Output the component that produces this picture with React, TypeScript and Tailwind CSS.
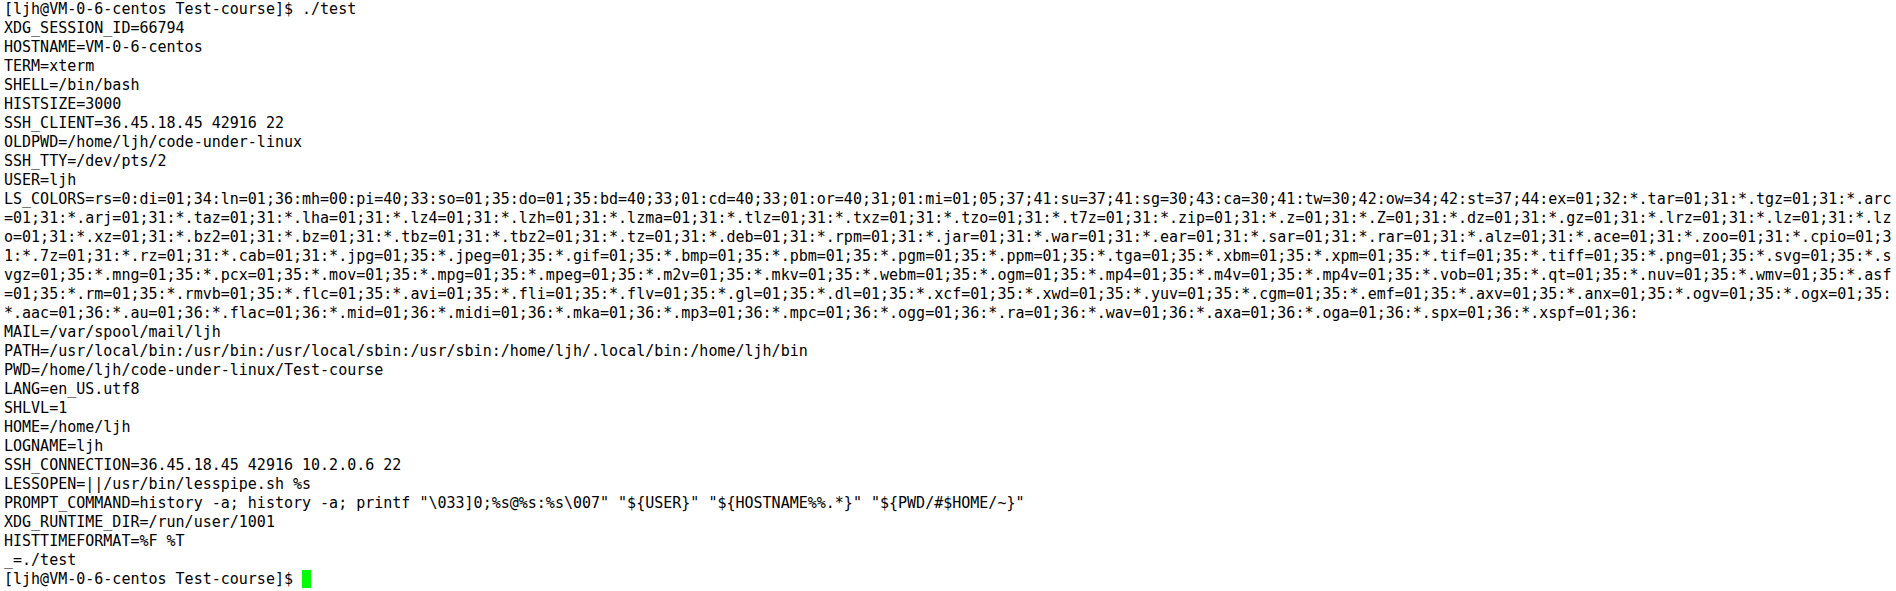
import React from "react";

const LS_COLORS =
  "LS_COLORS=rs=0:di=01;34:ln=01;36:mh=00:pi=40;33:so=01;35:do=01;35:bd=40;33;01:cd=40;33;01:or=40;31;01:mi=01;05;37;41:su=37;41:sg=30;43:ca=30;41:tw=30;42:ow=34;42:st=37;44:ex=01;32:*.tar=01;31:*.tgz=01;31:*.arc=01;31:*.arj=01;31:*.taz=01;31:*.lha=01;31:*.lz4=01;31:*.lzh=01;31:*.lzma=01;31:*.tlz=01;31:*.txz=01;31:*.tzo=01;31:*.t7z=01;31:*.zip=01;31:*.z=01;31:*.Z=01;31:*.dz=01;31:*.gz=01;31:*.lrz=01;31:*.lz=01;31:*.lzo=01;31:*.xz=01;31:*.bz2=01;31:*.bz=01;31:*.tbz=01;31:*.tbz2=01;31:*.tz=01;31:*.deb=01;31:*.rpm=01;31:*.jar=01;31:*.war=01;31:*.ear=01;31:*.sar=01;31:*.rar=01;31:*.alz=01;31:*.ace=01;31:*.zoo=01;31:*.cpio=01;31:*.7z=01;31:*.rz=01;31:*.cab=01;31:*.jpg=01;35:*.jpeg=01;35:*.gif=01;35:*.bmp=01;35:*.pbm=01;35:*.pgm=01;35:*.ppm=01;35:*.tga=01;35:*.xbm=01;35:*.xpm=01;35:*.tif=01;35:*.tiff=01;35:*.png=01;35:*.svg=01;35:*.svgz=01;35:*.mng=01;35:*.pcx=01;35:*.mov=01;35:*.mpg=01;35:*.mpeg=01;35:*.m2v=01;35:*.mkv=01;35:*.webm=01;35:*.ogm=01;35:*.mp4=01;35:*.m4v=01;35:*.mp4v=01;35:*.vob=01;35:*.qt=01;35:*.nuv=01;35:*.wmv=01;35:*.asf=01;35:*.rm=01;35:*.rmvb=01;35:*.flc=01;35:*.avi=01;35:*.fli=01;35:*.flv=01;35:*.gl=01;35:*.dl=01;35:*.xcf=01;35:*.xwd=01;35:*.yuv=01;35:*.cgm=01;35:*.emf=01;35:*.axv=01;35:*.anx=01;35:*.ogv=01;35:*.ogx=01;35:*.aac=01;36:*.au=01;36:*.flac=01;36:*.mid=01;36:*.midi=01;36:*.mka=01;36:*.mp3=01;36:*.mpc=01;36:*.ogg=01;36:*.ra=01;36:*.wav=01;36:*.axa=01;36:*.oga=01;36:*.spx=01;36:*.xspf=01;36:";

const COLS = 209;

// terminal wraps long lines at 209 columns
const wrap = (s: string): string[] => {
  const out: string[] = [];
  for (let i = 0; i < s.length; i += COLS) out.push(s.slice(i, i + COLS));
  return out;
};

const PROMPT = "[ljh@VM-0-6-centos Test-course]$ ";

const lines: string[] = [
  PROMPT + "./test",
  "XDG_SESSION_ID=66794",
  "HOSTNAME=VM-0-6-centos",
  "TERM=xterm",
  "SHELL=/bin/bash",
  "HISTSIZE=3000",
  "SSH_CLIENT=36.45.18.45 42916 22",
  "OLDPWD=/home/ljh/code-under-linux",
  "SSH_TTY=/dev/pts/2",
  "USER=ljh",
  ...wrap(LS_COLORS),
  "MAIL=/var/spool/mail/ljh",
  "PATH=/usr/local/bin:/usr/bin:/usr/local/sbin:/usr/sbin:/home/ljh/.local/bin:/home/ljh/bin",
  "PWD=/home/ljh/code-under-linux/Test-course",
  "LANG=en_US.utf8",
  "SHLVL=1",
  "HOME=/home/ljh",
  "LOGNAME=ljh",
  "SSH_CONNECTION=36.45.18.45 42916 10.2.0.6 22",
  "LESSOPEN=||/usr/bin/lesspipe.sh %s",
  'PROMPT_COMMAND=history -a; history -a; printf "\\033]0;%s@%s:%s\\007" "${USER}" "${HOSTNAME%%.*}" "${PWD/#$HOME/~}"',
  "XDG_RUNTIME_DIR=/run/user/1001",
  "HISTTIMEFORMAT=%F %T",
  "_=./test",
];

const Line = ({ text }: { text: string }) => (
  <div className="h-[19px] whitespace-pre">{text}</div>
);

export default function App() {
  return (
    <div className="w-[1896px] h-[591px] overflow-hidden bg-white text-black pl-1 font-['DejaVu_Sans_Mono',monospace] text-[15px] leading-[19px]">
      {lines.map((l, i) => (
        <Line key={i} text={l} />
      ))}
      <div className="h-[19px] flex items-start whitespace-pre">
        <span>{PROMPT}</span>
        <span className="mt-[0px] w-[9px] h-[18px] bg-[#00ff00]" />
      </div>
    </div>
  );
}
